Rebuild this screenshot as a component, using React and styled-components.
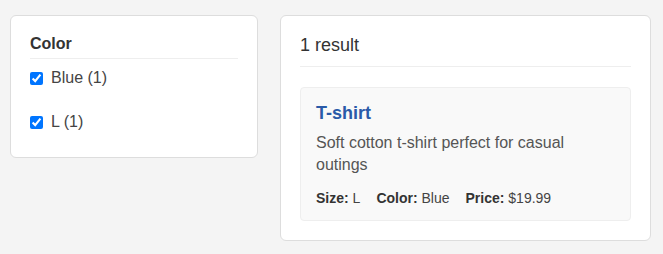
import React from 'react';
import styled, { createGlobalStyle } from 'styled-components';

const GlobalStyle = createGlobalStyle`
  body {
    margin: 0;
    background: #f4f4f4;
    font-family: "Liberation Sans", Arial, sans-serif;
    color: #333;
  }
`;

const Layout = styled.div`
  display: flex;
  align-items: flex-start;
  gap: 22px;
  padding: 15px 12px 14px 10px;
`;

const Card = styled.div`
  background: #fff;
  border: 1px solid #ddd;
  border-radius: 6px;
  padding: 19px;
  box-sizing: border-box;
  width: ${(p) => (p.$width ? p.$width : 'auto')};
  flex: ${(p) => (p.$grow ? 1 : 'none')};
`;

const GroupTitle = styled.h3`
  margin: 0 0 10px;
  font-size: 16px;
  line-height: 18px;
  font-weight: bold;
  color: #333;
  padding-bottom: 5px;
  border-bottom: 1px solid #eee;
`;

const Option = styled.label`
  display: flex;
  align-items: center;
  gap: 8px;
  font-size: 16px;
  color: #444;
  height: 18px;
  margin-bottom: ${(p) => (p.$last ? '7px' : '26px')};

  input {
    margin: 0;
    width: 13px;
    height: 13px;
  }
`;

const ResultHeader = styled.div`
  font-size: 18px;
  line-height: 21px;
  color: #333;
  padding-bottom: 10px;
  border-bottom: 1px solid #eee;
  margin-bottom: 20px;
`;

const Product = styled.div`
  background: #f9f9f9;
  border: 1px solid #eee;
  border-radius: 4px;
  padding: 15px 15px 14px;
`;

const ProductTitle = styled.h4`
  margin: 0 0 8px;
  font-size: 18px;
  font-weight: bold;
  color: #2a5aa8;
  line-height: 21px;
`;

const Description = styled.p`
  margin: 0 0 14px;
  font-size: 16px;
  line-height: 22px;
  color: #555;
  max-width: 280px;
`;

const Meta = styled.div`
  display: flex;
  gap: 16px;
  font-size: 14px;
  color: #444;
  line-height: 16px;

  b {
    color: #333;
  }
`;

export default function App() {
  return (
    <>
      <GlobalStyle />
      <Layout>
        <Card $width="248px">
          <GroupTitle>Color</GroupTitle>
          <Option>
            <input type="checkbox" defaultChecked />
            Blue (1)
          </Option>
          <Option $last>
            <input type="checkbox" defaultChecked />
            L (1)
          </Option>
        </Card>
        <Card $grow>
          <ResultHeader>1 result</ResultHeader>
          <Product>
            <ProductTitle>T-shirt</ProductTitle>
            <Description>Soft cotton t-shirt perfect for casual outings</Description>
            <Meta>
              <span><b>Size:</b> L</span>
              <span><b>Color:</b> Blue</span>
              <span><b>Price:</b> $19.99</span>
            </Meta>
          </Product>
        </Card>
      </Layout>
    </>
  );
}
